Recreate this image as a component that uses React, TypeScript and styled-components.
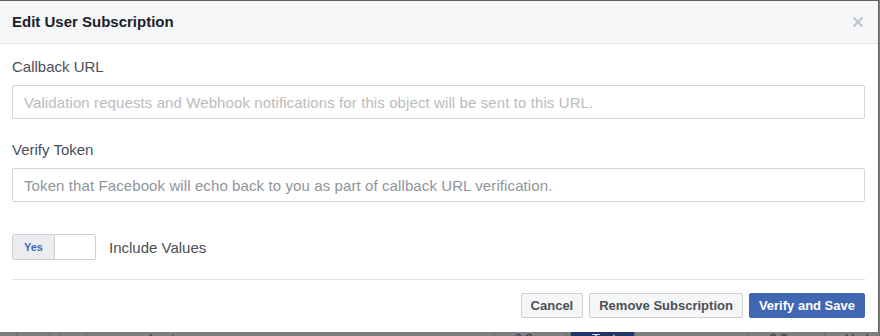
import React, { useState } from "react";
import styled, { createGlobalStyle } from "styled-components";

const GlobalStyle = createGlobalStyle`
  html, body {
    margin: 0;
    padding: 0;
    background: #7d7e80;
    font-family: "Liberation Sans", Arial, Helvetica, sans-serif;
  }
`;

const Page = styled.div`
  width: 880px;
  height: 336px;
  overflow: hidden;
  display: flex;
  flex-direction: column;
`;

const Dialog = styled.div`
  width: 878px;
  background: #fff;
  border-top: 1px solid #5f6062;
  border-right: 1px solid #5f6062;
`;

const Header = styled.div`
  height: 42px;
  background: #f5f6f7;
  border-bottom: 1px solid #e5e5e5;
  display: flex;
  align-items: center;
  justify-content: space-between;
  padding: 0 14px 0 12px;
`;

const Title = styled.h2`
  margin: 0;
  font-size: 15px;
  font-weight: bold;
  color: #1d2129;
  line-height: 18px;
`;

const CloseButton = styled.button`
  border: 0;
  background: none;
  padding: 0;
  width: 12px;
  height: 12px;
  display: flex;
  cursor: pointer;
`;

const Body = styled.div`
  padding: 14px 13px 14px 12px;
`;

const Field = styled.div`
  display: flex;
  flex-direction: column;
  gap: 9px;
  margin-bottom: 22px;
`;

const Label = styled.label`
  font-size: 15px;
  line-height: 18px;
  color: #4b4f56;
`;

const Input = styled.input<{ $light?: boolean }>`
  box-sizing: border-box;
  height: 34px;
  width: 100%;
  border: 1px solid #d3d6db;
  border-radius: 2px;
  padding: 0 10px 0 11px;
  font-family: inherit;
  font-size: 15px;
  letter-spacing: 0.1px;
  color: #1d2129;
  outline: none;

  &::placeholder {
    color: ${(p) => (p.$light ? "#b9bcc1" : "#90949c")};
  }
`;

const ToggleRow = styled.div`
  display: flex;
  align-items: center;
  gap: 13px;
  margin-top: 32px;
`;

const Toggle = styled.div`
  display: flex;
  height: 26px;
  box-sizing: border-box;
  border: 1px solid #ccd0d5;
  border-radius: 2px;
  overflow: hidden;
`;

const ToggleSide = styled.button<{ $on?: boolean }>`
  width: 41px;
  border: 0;
  padding: 0;
  font-family: inherit;
  font-size: 11px;
  font-weight: bold;
  color: #4267b2;
  background: ${(p) => (p.$on ? "#ebedf0" : "#fff")};
  border-left: ${(p) => (p.$on ? "0" : "1px solid #ccd0d5")};
`;

const ToggleText = styled.span`
  font-size: 15px;
  color: #4b4f56;
`;

const Divider = styled.hr`
  border: 0;
  border-top: 1px solid #dddfe2;
  margin: 19px 0 13px;
`;

const Footer = styled.div`
  display: flex;
  justify-content: flex-end;
  gap: 6px;
`;

const Button = styled.button<{ $primary?: boolean }>`
  height: 25px;
  box-sizing: border-box;
  padding: 0 9px;
  border-radius: 2px;
  font-family: inherit;
  font-size: 13px;
  font-weight: bold;
  border: 1px solid ${(p) => (p.$primary ? "#4267b2" : "#ced0d4")};
  background: ${(p) => (p.$primary ? "#4267b2" : "#f5f6f7")};
  color: ${(p) => (p.$primary ? "#fff" : "#4b4f56")};
  cursor: pointer;
`;

/* the page behind the dialog, only its top edge shows */
const Backdrop = styled.div`
  flex: 1;
  display: flex;
  align-items: flex-start;
  overflow: hidden;
  font-size: 13px;
  color: #26314d;
`;

const Peek = styled.div<{ $w: number; $pad?: number; $dark?: boolean }>`
  width: ${(p) => p.$w}px;
  height: 12px;
  flex-shrink: 0;
  box-sizing: border-box;
  padding-left: ${(p) => p.$pad ?? 0}px;
  background: ${(p) => (p.$dark ? "#1f3366" : "transparent")};
  color: ${(p) => (p.$dark ? "#dfe3ee" : "inherit")};
  border-right: 1px solid #6e6f71;
  line-height: 14px;
  white-space: nowrap;
`;

const App: React.FC = () => {
  const [include, setInclude] = useState(true);

  return (
    <Page>
      <GlobalStyle />
      <Dialog>
        <Header>
          <Title>Edit User Subscription</Title>
          <CloseButton aria-label="Close">
            <svg width="12" height="12" viewBox="0 0 12 12">
              <path d="M1.5 1.5 L10.5 10.5 M10.5 1.5 L1.5 10.5" stroke="#bec2c9" strokeWidth="2.2" />
            </svg>
          </CloseButton>
        </Header>
        <Body>
          <Field>
            <Label>Callback URL</Label>
            <Input
              $light
              autoFocus
              placeholder="Validation requests and Webhook notifications for this object will be sent to this URL."
            />
          </Field>
          <Field>
            <Label>Verify Token</Label>
            <Input placeholder="Token that Facebook will echo back to you as part of callback URL verification." />
          </Field>
          <ToggleRow>
            <Toggle onClick={() => setInclude(!include)}>
              <ToggleSide $on={include}>{include ? "Yes" : ""}</ToggleSide>
              <ToggleSide>{include ? "" : "No"}</ToggleSide>
            </Toggle>
            <ToggleText>Include Values</ToggleText>
          </ToggleRow>
          <Divider />
          <Footer>
            <Button>Cancel</Button>
            <Button>Remove Subscription</Button>
            <Button $primary>Verify and Save</Button>
          </Footer>
        </Body>
      </Dialog>
      <Backdrop>
        <Peek $w={17} />
        <Peek $w={33} />
        <Peek $w={10} />
        <Peek $w={27} />
        <Peek $w={408} $pad={55}>about</Peek>
        <Peek $w={72} $pad={13}>v2.2 ▾</Peek>
        <Peek $w={4} />
        <Peek $w={64} $pad={21} $dark>Test</Peek>
        <Peek $w={113} />
        <Peek $w={77} $pad={15}>v2.2 ▾</Peek>
        <Peek $w={55} $pad={20}>Upd</Peek>
      </Backdrop>
    </Page>
  );
};

export default App;
